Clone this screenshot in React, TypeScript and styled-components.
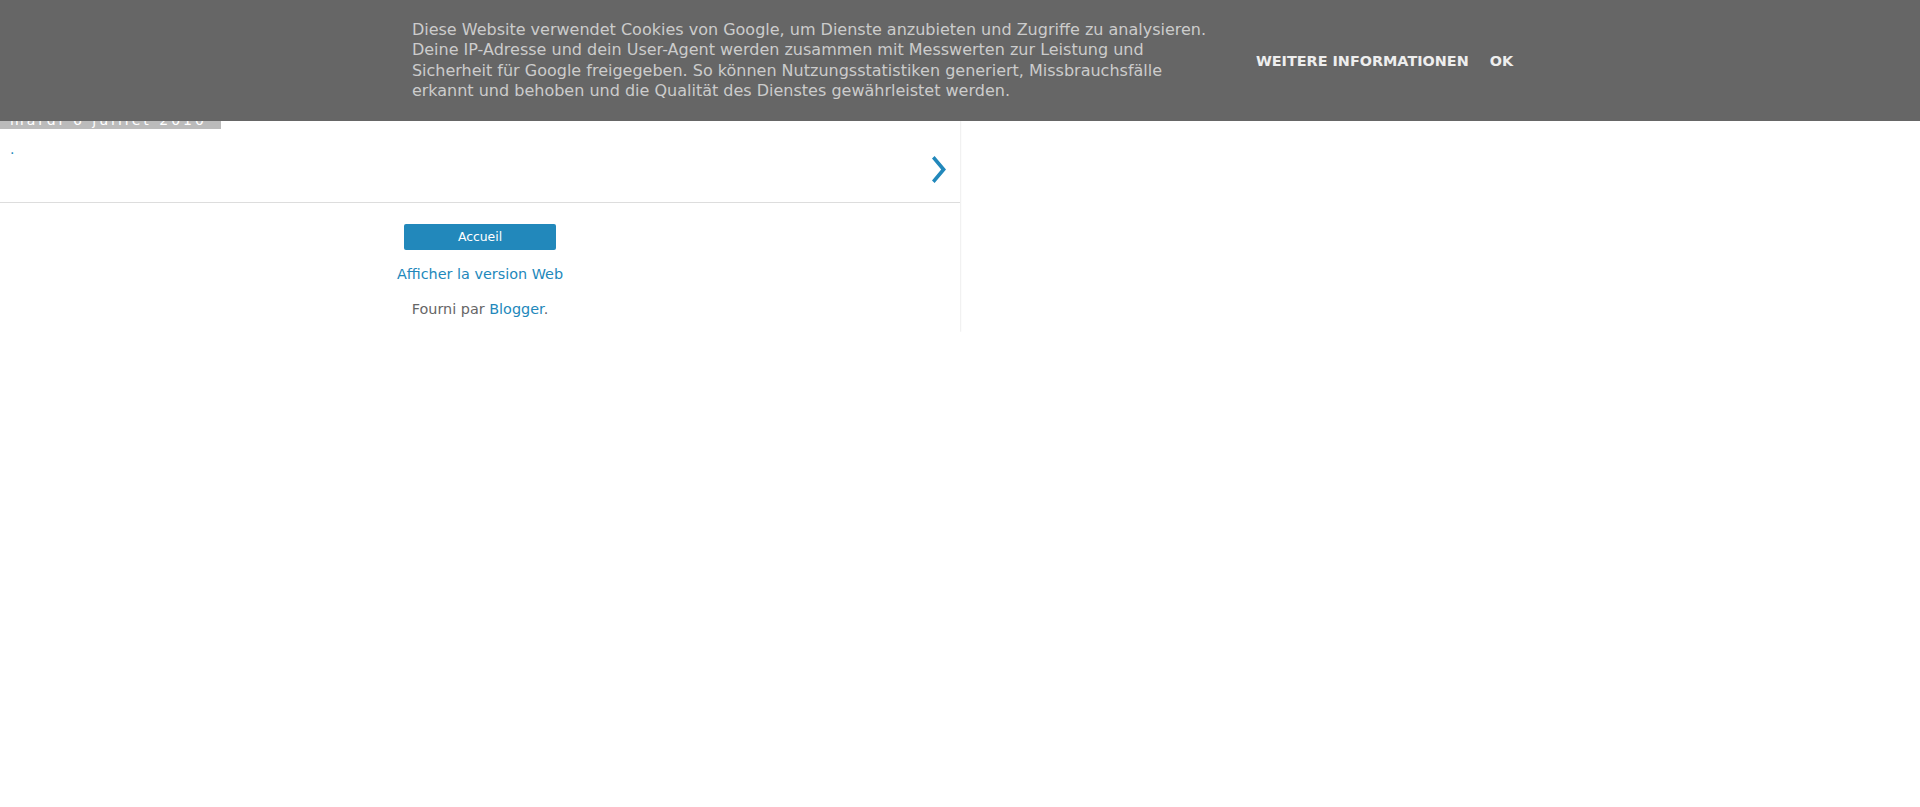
import styled, { createGlobalStyle } from 'styled-components';

const GlobalStyle = createGlobalStyle`
    html, body {
        margin: 0;
        padding: 0;
        background: #fff;
        font-family: "DejaVu Sans", sans-serif;
    }
`

const CookieBar = styled.div`
    position: fixed;
    top: 0;
    left: 0;
    right: 0;
    height: 121px;
    z-index: 255;
    background-color: #666;
    display: flex;
    justify-content: center;
    align-items: center;
`

const CookieText = styled.div`
    width: 800px;
    margin: 0 20px;
    font-size: 16px;
    line-height: 20.3px;
    color: #ccc;
    text-align: left;
`

const CookieButtons = styled.div`
    display: flex;
    gap: 21px;
    margin: 0 15px 0 24px;
`

const CookieButton = styled.a`
    font-size: 14.4px;
    font-weight: bold;
    text-transform: uppercase;
    white-space: nowrap;
    color: #eee;
    text-decoration: none;
    cursor: pointer;
`

const Page = styled.div`
    width: 960px;
    padding-top: 111px;
    background: #fff;
    box-shadow: 0 0 2px rgba(0, 0, 0, 0.18);
`

const DateHeader = styled.h2`
    margin: 0;
    font-size: 14px;
    font-weight: normal;
    line-height: 18px;

    span {
        display: inline-block;
        background-color: #bbb;
        color: #fff;
        letter-spacing: 3px;
        padding: 0 14px 0 10px;
    }
`

const PostRow = styled.div`
    box-sizing: border-box;
    height: 74px;
    padding: 0 14px 0 10px;
    display: flex;
    align-items: center;
    justify-content: space-between;
    border-bottom: 1px solid #ddd;
`

const PostTitle = styled.a`
    align-self: flex-start;
    margin-top: 10px;
    font-size: 14px;
    line-height: 20px;
    color: #2288bb;
    text-decoration: none;
`

const Arrow = styled.svg`
    display: block;
    margin-top: 7px;
`

const Footer = styled.div`
    padding: 21px 0 13px;
    display: flex;
    flex-direction: column;
    align-items: center;
    font-size: 14.4px;
    line-height: 20px;
    color: #666;

    a {
        color: #2288bb;
        text-decoration: none;
    }
`

const HomeButton = styled.a`
    box-sizing: border-box;
    width: 152px;
    height: 26px;
    display: flex;
    align-items: center;
    justify-content: center;
    background: #2288bb;
    border-radius: 2px;
    font-size: 12.4px;
    &&& {
        color: #fff;
    }
`

const FooterLine = styled.div<{ $gap: number }>`
    margin-top: ${p => p.$gap}px;
`

const App = () => {
    return (
        <>
            <GlobalStyle />
            <CookieBar>
                <CookieText>
                    Diese Website verwendet Cookies von Google, um Dienste anzubieten und Zugriffe zu analysieren.
                    Deine IP-Adresse und dein User-Agent werden zusammen mit Messwerten zur Leistung und
                    Sicherheit für Google freigegeben. So können Nutzungsstatistiken generiert, Missbrauchsfälle
                    erkannt und behoben und die Qualität des Dienstes gewährleistet werden.
                </CookieText>
                <CookieButtons>
                    <CookieButton>Weitere Informationen</CookieButton>
                    <CookieButton>OK</CookieButton>
                </CookieButtons>
            </CookieBar>

            <Page>
                <DateHeader><span>mardi 6 juillet 2010</span></DateHeader>
                <PostRow>
                    <PostTitle href="#">.</PostTitle>
                    <Arrow width="14" height="27" viewBox="0 0 14 27">
                        <polygon points="0,2.6 2.6,0 14,13.5 2.6,27 0,24.4 9.2,13.5" fill="#2288bb" />
                    </Arrow>
                </PostRow>
                <Footer>
                    <HomeButton href="#">Accueil</HomeButton>
                    <FooterLine $gap={14}><a href="#">Afficher la version Web</a></FooterLine>
                    <FooterLine $gap={15}>Fourni par <a href="#">Blogger</a>.</FooterLine>
                </Footer>
            </Page>
        </>
    )
}

export default App
